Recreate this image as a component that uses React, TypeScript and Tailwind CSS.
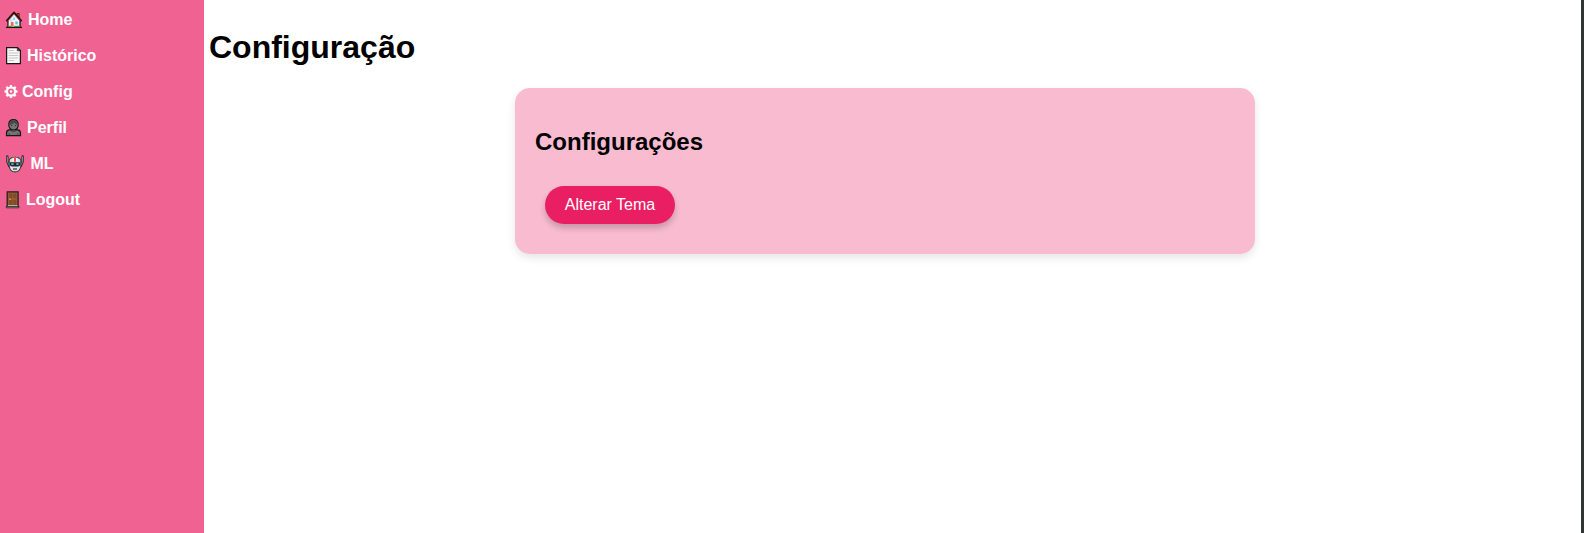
import type { ReactNode } from "react";

function HomeIcon() {
  return (
    <svg width="18" height="18" viewBox="0 0 18 18">
      <path d="M3.500 8.500V16h11V8.500L9 2.500z" fill="#eaf6fc" />
      <path d="M12 2.500h2.200V7L12 5z" fill="#d8432f" stroke="#2a1717" strokeWidth="0.800" />
      <path d="M1.500 10.200 9 1.600l7.500 8.600" fill="none" stroke="#1c1415" strokeWidth="2.100" strokeLinejoin="round" />
      <path d="M2.800 10 9 3l6.200 7" fill="none" stroke="#cf3c34" strokeWidth="0.900" />
      <path d="M2.900 10v6M15.100 10v6" stroke="#1c1415" strokeWidth="1.100" />
      <rect x="8" y="6.500" width="2" height="2.500" fill="#8ed6f2" />
      <rect x="10.300" y="10.500" width="2.400" height="2.800" fill="#55bcea" />
      <rect x="4.800" y="8.500" width="2.700" height="1.800" fill="#b5e4f6" />
      <rect x="5.800" y="11" width="2.700" height="4.500" fill="#f06b48" />
      <path d="M3.300 15.300H6M9 15.300h5.700" stroke="#56b744" strokeWidth="1.200" />
      <path d="M1 16.400h16" stroke="#17171a" strokeWidth="1.300" />
    </svg>
  );
}

function PageIcon() {
  return (
    <svg width="17" height="18" viewBox="0 0 17 18">
      <path d="M1.600.6h10.900l2.900 2.900v13.200H1.600z" fill="#f7f7f7" stroke="#18181b" strokeWidth="1.200" />
      <path d="M12.300.9v2.800h2.900z" fill="#555" stroke="#18181b" strokeWidth="0.600" />
      <path d="M3.500 3.500H9M3.500 6h9.800M3.500 8.500h9.800M3.500 11h9.800M3.500 13.500H9" stroke="#c6c6c6" strokeWidth="1" />
    </svg>
  );
}

function GearIcon() {
  return (
    <svg width="14" height="14" viewBox="0 0 14 14" fill="none" stroke="#fff">
      <circle cx="7" cy="6.500" r="4.100" strokeWidth="2.200" />
      <circle cx="7" cy="6.500" r="1.200" fill="#fff" stroke="none" />
      <path d="M7 0v2M7 11v2M.5 6.500h2M11.500 6.500h2M2.400 1.900l1.500 1.500M10.100 9.600l1.500 1.500M2.400 11.100l1.500-1.500M10.100 3.400l1.500-1.500" strokeWidth="2.300" />
    </svg>
  );
}

function PersonIcon() {
  return (
    <svg width="17" height="18" viewBox="0 0 17 18">
      <path d="M1.500 16.700V14c0-1.800 1.100-2.900 3-3.100h8c1.900.2 3 1.300 3 3.100v2.700z" fill="#747474" stroke="#17171a" strokeWidth="1.200" />
      <path d="M6 9.500v2.200c1.400 1.100 3.600 1.100 5 0V9.500" fill="#686868" stroke="#333" strokeWidth="0.600" />
      <path d="M3.800 5.600C3.800 2.300 5.600.7 8.500.7s4.700 1.600 4.700 4.900-1.900 5.400-4.700 5.400-4.700-2.100-4.700-5.400z" fill="#767676" stroke="#17171a" strokeWidth="1.200" />
      <path d="M4.300 5.600c0-2.800 1.500-4.300 4.200-4.300s4.200 1.500 4.200 4.300C11 5.500 9.800 4.600 9.500 3.500 8.500 5 6.500 5.800 4.300 5.600z" fill="#484848" />
      <path d="M6.300 6.500h.9M9.900 6.500h.9" stroke="#222" strokeWidth="1" />
      <path d="M4.200 14.200v2.300M12.800 14.200v2.300" stroke="#303030" strokeWidth="0.700" />
    </svg>
  );
}

function RobotIcon() {
  return (
    <svg width="20" height="18" viewBox="0 0 20 18">
      <path d="M2.300 1.500v5l2.100 4.700M17.700 1.500v5l-2.100 4.700" fill="none" stroke="#252629" strokeWidth="2.400" strokeLinecap="round" />
      <path d="M2.300 1.500v5l2.100 4M17.700 1.500v5l-2.100 4" fill="none" stroke="#a4a8ac" strokeWidth="0.900" />
      <path d="M4.200 4.500C5.400 3 7.200 2.300 10 2.300s4.600.7 5.800 2.200v7c-.6 3-2.600 5.400-5.800 5.400s-5.200-2.400-5.800-5.400z" fill="#dfe1e2" stroke="#393b3e" strokeWidth="1.100" />
      <path d="M7.600 2.700h4.800v3.500H7.600z" fill="#fff" />
      <path d="M9 2.700h2v4H9z" fill="#f0512b" />
      <path d="M5 7.200h10v3.400l-1.800.9H6.800L5 10.600z" fill="#202427" />
      <path d="M6.300 9.200h2.400M11.300 9.200h2.400" stroke="#38bdf2" strokeWidth="1.700" />
      <path d="M8 14h4" stroke="#595d60" strokeWidth="1.600" />
    </svg>
  );
}

function DoorIcon() {
  return (
    <svg width="16" height="18" viewBox="0 0 16 18">
      <path d="M2.200.8h10.900v15.400H2.200z" fill="#965a34" stroke="#29211e" strokeWidth="1.300" />
      <path d="M4.800 3h2v3.500h-2zM8.700 3h2v3.500h-2zM4.800 9.500h2v4h-2zM8.700 9.500h2v4h-2z" fill="#86502e" stroke="#744222" strokeWidth="0.500" />
      <circle cx="5" cy="8.200" r=".8" fill="#eab342" />
      <path d="M2.900 14.700h9.500" stroke="#ded2cb" strokeWidth="1" />
      <path d="M1.300 15.400H14v1.400H1.300z" fill="#bdbdbd" stroke="#29211e" strokeWidth="0.800" />
    </svg>
  );
}

const items: { label: string; icon: ReactNode; slot: string }[] = [
  { label: "Home", icon: <HomeIcon />, slot: "w-[23px]" },
  { label: "Histórico", icon: <PageIcon />, slot: "w-[22px]" },
  { label: "Config", icon: <GearIcon />, slot: "w-[17px] -ml-px mr-px" },
  { label: "Perfil", icon: <PersonIcon />, slot: "w-[22px]" },
  { label: "ML", icon: <RobotIcon />, slot: "w-[25.5px]" },
  { label: "Logout", icon: <DoorIcon />, slot: "w-[21px]" },
];

export default function App() {
  return (
    <div className="flex h-[533px] w-full overflow-hidden bg-white font-['Liberation_Sans',sans-serif] text-black">
      <nav className="flex w-[204px] shrink-0 flex-col bg-[#f06292] pt-0.5 pl-[5px]">
        {items.map(({ label, icon, slot }) => (
          <a key={label} href="#" className="flex h-9 items-center text-base font-bold text-white">
            <span className={`flex shrink-0 ${slot}`}>{icon}</span>
            <span>{label}</span>
          </a>
        ))}
      </nav>
      <main className="min-w-0 flex-1 pr-5 pl-[5px]">
        <h1 className="mt-[29px] mb-[22px] text-[32px] leading-[37px] font-bold">Configuração</h1>
        <section className="mx-auto h-[166px] w-[740px] rounded-[15px] bg-[#f8bbd0] px-5 pt-10 shadow-[0_4px_8px_rgba(0,0,0,0.1)]">
          <h2 className="text-2xl leading-7 font-bold">Configurações</h2>
          <button className="mt-[30px] ml-2.5 flex h-[38px] w-[130px] items-center justify-center rounded-[20px] bg-[#e91e63] text-base text-white shadow-[0_4px_6px_rgba(0,0,0,0.2)]">
            Alterar Tema
          </button>
        </section>
      </main>
      <div className="w-[3px] shrink-0 bg-[#333436]" />
    </div>
  );
}
